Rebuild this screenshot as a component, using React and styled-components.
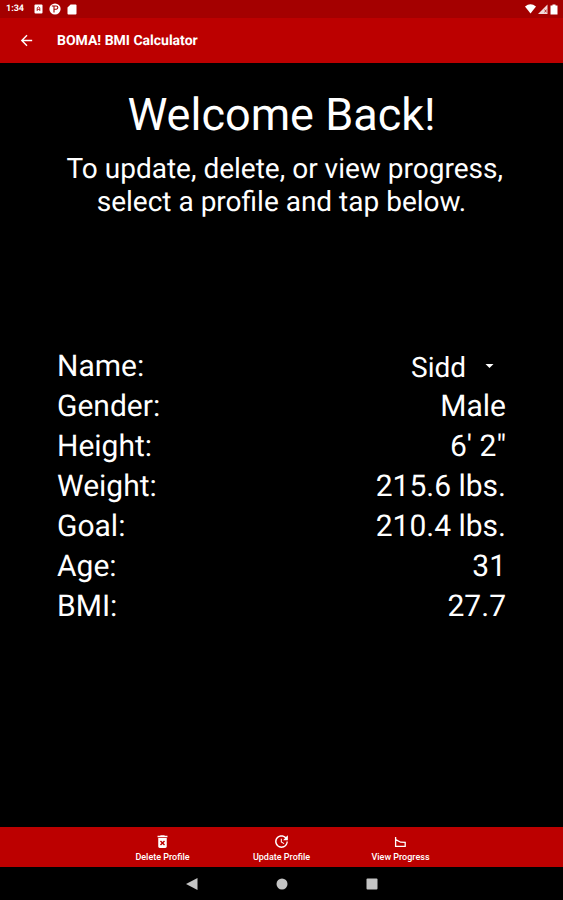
import React, { useState } from "react";
import styled, { createGlobalStyle } from "styled-components";
import { MdArrowBack, MdDeleteForever, MdUpdate } from "react-icons/md";

const GlobalStyle = createGlobalStyle`
  * {
    box-sizing: border-box;
  }

  body {
    margin: 0;
    background-color: #000;
    color: #fff;
    font-family: Roboto, "Liberation Sans", sans-serif;
    text-rendering: geometricPrecision;
  }
`;

const Screen = styled.div`
  min-height: 100vh;
  display: flex;
  flex-direction: column;
`;

const StatusBar = styled.div`
  height: 18px;
  padding: 0 5px 0 6px;
  display: flex;
  align-items: center;
  justify-content: space-between;
  background-color: #a40000;
`;

const StatusGroup = styled.div`
  display: flex;
  align-items: center;
  gap: ${(props) => props.$gap};
`;

const Clock = styled.span`
  width: 22px;
  font-size: 9px;
  line-height: 18px;
  font-weight: 700;
`;

const AppBar = styled.header`
  height: 45px;
  padding: 0 18px;
  display: flex;
  align-items: center;
  gap: 22px;
  background-color: #bc0000;
`;

const BackButton = styled.button`
  padding: 0;
  border: none;
  display: flex;
  background-color: transparent;
  color: #fff;
  font-size: 17px;
  cursor: pointer;
`;

const AppTitle = styled.h1`
  margin: 0;
  font-size: 14px;
  line-height: 20px;
  font-weight: 700;
`;

const Content = styled.main`
  flex: 1;
  padding: 24px 57px;
`;

const Title = styled.h2`
  margin: 0;
  text-align: center;
  font-size: 45px;
  line-height: 56px;
  font-weight: 400;
`;

const Subtitle = styled.p`
  margin: 9px 0 0;
  text-align: center;
  font-size: 28px;
  line-height: 33px;
  white-space: pre;
  display: flex;
  flex-direction: column;
  align-items: center;
`;

const Profile = styled.div`
  margin-top: 129px;
`;

const Row = styled.div`
  height: 40px;
  display: flex;
  align-items: center;
  justify-content: space-between;
  font-size: 30px;
  line-height: 36px;
`;

const SelectWrapper = styled.div`
  padding: 2px 12px 0 0;
  display: flex;
  align-items: center;
  gap: 18px;
`;

const Select = styled.select`
  appearance: none;
  padding: 0;
  border: none;
  background-color: #000;
  color: #fff;
  font-family: inherit;
  font-size: 28px;
  line-height: 36px;
  text-rendering: inherit;
  cursor: pointer;
`;

const BottomBar = styled.nav`
  height: 40px;
  padding: 0 103px;
  display: flex;
  justify-content: center;
  background-color: #bc0000;
`;

const Tab = styled.button`
  flex: 1;
  padding: 4px 0 0;
  border: none;
  display: flex;
  flex-direction: column;
  align-items: center;
  background-color: transparent;
  color: #fff;
  font-family: inherit;
  font-size: 9px;
  line-height: 10px;
  font-weight: 500;
  white-space: nowrap;
  cursor: pointer;

  svg {
    width: 17px;
    height: 17px;
    margin: 2px 0;
  }
`;

const SystemNav = styled.div`
  height: 33px;
  display: flex;
  align-items: center;
  justify-content: center;
  gap: 74px;
`;

const SystemButton = styled.button`
  padding: 0;
  border: none;
  display: flex;
  background-color: transparent;
  color: #c4c4c4;
  cursor: pointer;

  svg {
    width: 16px;
    height: 16px;
    fill: currentColor;
  }
`;

const details = [
  { label: "Gender:", value: "Male" },
  { label: "Height:", value: "6' 2\"" },
  { label: "Weight:", value: "215.6 lbs." },
  { label: "Goal:", value: "210.4 lbs." },
  { label: "Age:", value: "31" },
  { label: "BMI:", value: "27.7" },
];

const ChartIcon = () => (
  <svg viewBox="0 0 17 17" fill="none" stroke="currentColor">
    <path d="M3.6 4V13.3H13.2V9.4L8.6 9.2L3.8 6.6" strokeWidth="1.3" />
  </svg>
);

const App = () => {
  const [name, setName] = useState("Sidd");

  return (
    <Screen>
      <GlobalStyle />
      <StatusBar>
        <StatusGroup $gap="6px">
          <Clock>1:34</Clock>
          <svg width="9" height="10" viewBox="0 0 9 10">
            <rect x="0.5" y="0.5" width="8" height="9" rx="1" fill="#fff" />
            <path d="M3.2 7V3.8L4.5 2.9L5.8 3.8V7M3.2 5.4H5.8" fill="none" stroke="#a40000" strokeWidth="0.8" />
          </svg>
          <svg width="12" height="12" viewBox="0 0 12 12">
            <circle cx="6" cy="6" r="5.6" fill="#fff" />
            <path d="M5 9.6V3H7.2A1.6 1.6 0 0 1 7.2 6.2H5M2.8 3H5" fill="none" stroke="#a40000" strokeWidth="1.1" />
          </svg>
          <svg width="10" height="11" viewBox="0 0 10 11">
            <path d="M3.6 0.5H8.6Q9.5 0.5 9.5 1.4V9.6Q9.5 10.5 8.6 10.5H1.4Q0.5 10.5 0.5 9.6V3.6Z" fill="#fff" />
          </svg>
        </StatusGroup>
        <StatusGroup $gap="2px">
          <svg width="11" height="10" viewBox="0 0 11 10">
            <path d="M0 2.6Q5.5 -2 11 2.6L5.5 9.6Z" fill="#fff" />
          </svg>
          <svg width="10" height="10" viewBox="0 0 10 10">
            <path d="M0 10L9.5 0.5V10Z" fill="#fff" fillOpacity="0.85" />
            <path d="M6.6 5.6L8.6 8.4M8.6 5.6L6.6 8.4" stroke="#a40000" strokeWidth="0.7" />
          </svg>
          <svg width="8" height="11" viewBox="0 0 8 11">
            <path d="M2.5 0.5H5.5V1.5H7.5V10.5H0.5V1.5H2.5Z" fill="#fff" />
          </svg>
        </StatusGroup>
      </StatusBar>
      <AppBar>
        <BackButton aria-label="Back">
          <MdArrowBack />
        </BackButton>
        <AppTitle>BOMA! BMI Calculator</AppTitle>
      </AppBar>
      <Content>
        <Title>Welcome Back!</Title>
        <Subtitle>
          <span>{" To update, delete, or view progress,"}</span>
          <span>select a profile and tap below.</span>
        </Subtitle>
        <Profile>
          <Row>
            <label htmlFor="profile">Name:</label>
            <SelectWrapper>
              <Select id="profile" value={name} onChange={(e) => setName(e.target.value)}>
                <option>Sidd</option>
              </Select>
              <svg width="9" height="12" viewBox="0 0 9 12">
                <path d="M0.5 2H8.5L4.5 6Z" fill="#fff" />
              </svg>
            </SelectWrapper>
          </Row>
          {details.map((item) => (
            <Row key={item.label}>
              <span>{item.label}</span>
              <span>{item.value}</span>
            </Row>
          ))}
        </Profile>
      </Content>
      <BottomBar>
        <Tab>
          <MdDeleteForever />
          Delete Profile
        </Tab>
        <Tab>
          <MdUpdate />
          Update Profile
        </Tab>
        <Tab>
          <ChartIcon />
          View Progress
        </Tab>
      </BottomBar>
      <SystemNav>
        <SystemButton aria-label="System back">
          <svg viewBox="0 0 16 16">
            <path d="M2 8L13.5 2V14Z" />
          </svg>
        </SystemButton>
        <SystemButton aria-label="Home">
          <svg viewBox="0 0 16 16">
            <circle cx="8" cy="8" r="5.5" />
          </svg>
        </SystemButton>
        <SystemButton aria-label="Recent apps">
          <svg viewBox="0 0 16 16">
            <rect x="2.5" y="2.5" width="11" height="11" rx="1" />
          </svg>
        </SystemButton>
      </SystemNav>
    </Screen>
  );
};

export default App;
